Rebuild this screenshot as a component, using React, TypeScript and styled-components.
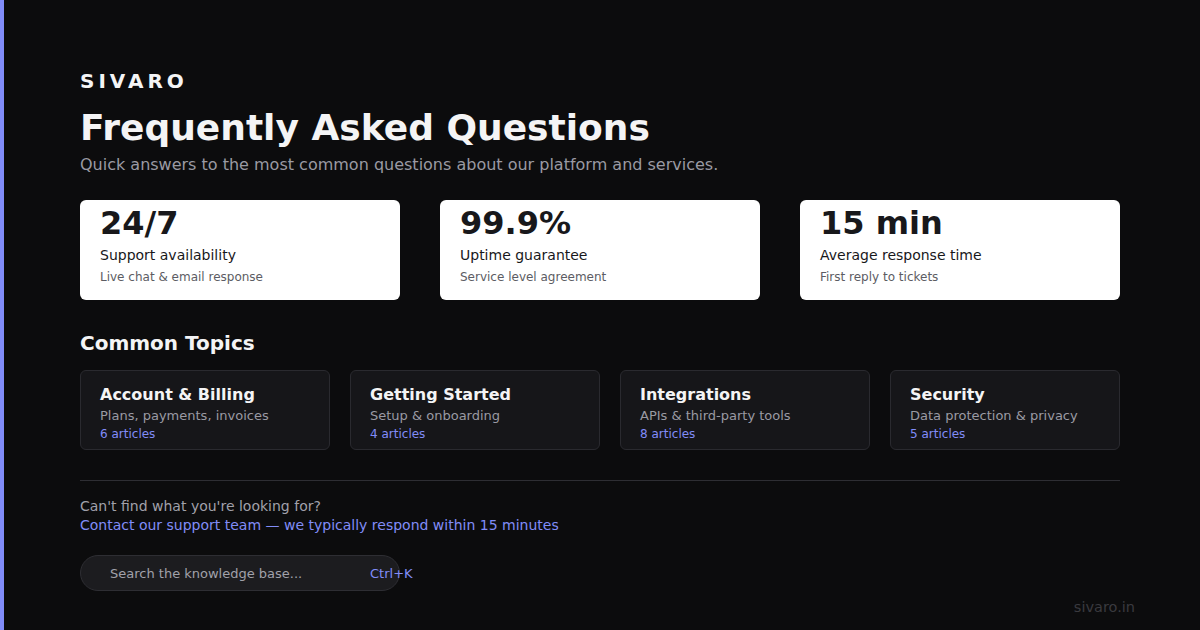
import styled, { createGlobalStyle } from "styled-components";

const GlobalStyle = createGlobalStyle`
  html, body {
    margin: 0;
    padding: 0;
    background: #0c0c0d;
  }
  body {
    font-family: "DejaVu Sans", "Liberation Sans", sans-serif;
  }
`;

const stats = [
  { value: "24/7", label: "Support availability", note: "Live chat & email response" },
  { value: "99.9%", label: "Uptime guarantee", note: "Service level agreement" },
  { value: "15 min", label: "Average response time", note: "First reply to tickets" },
];

const topics = [
  { title: "Account & Billing", desc: "Plans, payments, invoices", count: 6 },
  { title: "Getting Started", desc: "Setup & onboarding", count: 4 },
  { title: "Integrations", desc: "APIs & third-party tools", count: 8 },
  { title: "Security", desc: "Data protection & privacy", count: 5 },
];

export default function App() {
  return (
    <>
      <GlobalStyle />
      <Page>
        <Content>
          <Brand>SIVARO</Brand>
          <Title>Frequently Asked Questions</Title>
          <Subtitle>Quick answers to the most common questions about our platform and services.</Subtitle>

          <StatRow>
            {stats.map((s) => (
              <StatCard key={s.value}>
                <StatValue>{s.value}</StatValue>
                <StatLabel>{s.label}</StatLabel>
                <StatNote>{s.note}</StatNote>
              </StatCard>
            ))}
          </StatRow>

          <SectionTitle>Common Topics</SectionTitle>
          <TopicGrid>
            {topics.map((t) => (
              <TopicCard key={t.title}>
                <TopicTitle>{t.title}</TopicTitle>
                <TopicDesc>{t.desc}</TopicDesc>
                <TopicCount>{t.count} articles</TopicCount>
              </TopicCard>
            ))}
          </TopicGrid>

          <Divider />

          <HelpText>Can't find what you're looking for?</HelpText>
          <HelpLink>Contact our support team — we typically respond within 15 minutes</HelpLink>

          <BottomRow>
            <SearchBar>
              <Placeholder>Search the knowledge base...</Placeholder>
              <Shortcut>Ctrl+K</Shortcut>
            </SearchBar>
            <Domain>sivaro.in</Domain>
          </BottomRow>
        </Content>
      </Page>
    </>
  );
}

const Page = styled.div`
  display: flex;
  width: 1200px;
  height: 630px;
  overflow: hidden;
  background: #0c0c0d;
  border-left: 4px solid #818cf8;
  box-sizing: border-box;
`;

const Content = styled.div`
  display: flex;
  flex-direction: column;
  width: 1040px;
  padding: 68px 0 0 76px;
`;

const Brand = styled.div`
  color: #f4f4f5;
  font-size: 20px;
  font-weight: 700;
  letter-spacing: 4px;
  line-height: 26px;
`;

const Title = styled.h1`
  margin: 12px 0 0;
  color: #f4f4f5;
  font-size: 36px;
  font-weight: 700;
  line-height: 44px;
`;

const Subtitle = styled.p`
  margin: 3px 0 0;
  color: #9a9aa3;
  font-size: 16px;
  line-height: 24px;
`;

const StatRow = styled.div`
  display: grid;
  grid-template-columns: repeat(3, 320px);
  gap: 40px;
  margin-top: 23px;
`;

const StatCard = styled.div`
  display: flex;
  flex-direction: column;
  height: 100px;
  padding: 0 20px;
  box-sizing: border-box;
  background: #ffffff;
  border-radius: 6px;
`;

const StatValue = styled.div`
  color: #18181b;
  font-size: 32px;
  font-weight: 700;
  line-height: 40px;
  margin-top: 3px;
`;

const StatLabel = styled.div`
  margin-top: 2px;
  color: #18181b;
  font-size: 14px;
  line-height: 20px;
`;

const StatNote = styled.div`
  margin-top: 4px;
  color: #5c5c63;
  font-size: 12px;
  line-height: 16px;
`;

const SectionTitle = styled.h2`
  margin: 30px 0 0;
  color: #f4f4f5;
  font-size: 20px;
  font-weight: 700;
  line-height: 26px;
`;

const TopicGrid = styled.div`
  display: grid;
  grid-template-columns: 250px 250px 250px 230px;
  gap: 20px;
  margin-top: 14px;
`;

const TopicCard = styled.div`
  display: flex;
  flex-direction: column;
  height: 80px;
  padding: 14px 19px 0;
  box-sizing: border-box;
  background: #161619;
  border: 1px solid #2a2a2f;
  border-radius: 6px;
`;

const TopicTitle = styled.div`
  color: #f4f4f5;
  font-size: 16px;
  font-weight: 700;
  line-height: 20px;
`;

const TopicDesc = styled.div`
  margin-top: 1px;
  color: #9a9aa3;
  font-size: 13px;
  line-height: 20px;
`;

const TopicCount = styled.div`
  margin-top: -1px;
  color: #818cf8;
  font-size: 12px;
  line-height: 18px;
`;

const Divider = styled.hr`
  width: 1040px;
  margin: 30px 0 0;
  border: none;
  border-top: 1px solid #2e2e33;
`;

const HelpText = styled.div`
  margin-top: 15px;
  color: #a1a1aa;
  font-size: 14px;
  line-height: 20px;
`;

const HelpLink = styled.div`
  margin-top: -1px;
  color: #818cf8;
  font-size: 14px;
  line-height: 20px;
`;

const BottomRow = styled.div`
  display: flex;
  justify-content: space-between;
  align-items: flex-start;
  margin-top: 20px;
`;

const SearchBar = styled.div`
  display: flex;
  align-items: center;
  width: 320px;
  height: 36px;
  padding: 0 30px 0 29px;
  box-sizing: border-box;
  background: #1c1c1f;
  border: 1px solid #2e2e33;
  border-radius: 18px;
  overflow: visible;
`;

const Placeholder = styled.span`
  flex: 0 0 260px;
  color: #a1a1aa;
  font-size: 13px;
  white-space: nowrap;
`;

const Shortcut = styled.span`
  flex: 0 0 auto;
  color: #818cf8;
  font-size: 13px;
  white-space: nowrap;
`;

const Domain = styled.div`
  margin: 42px -15px 0 0;
  color: #3a3a3f;
  font-size: 14.5px;
  line-height: 20px;
`;
